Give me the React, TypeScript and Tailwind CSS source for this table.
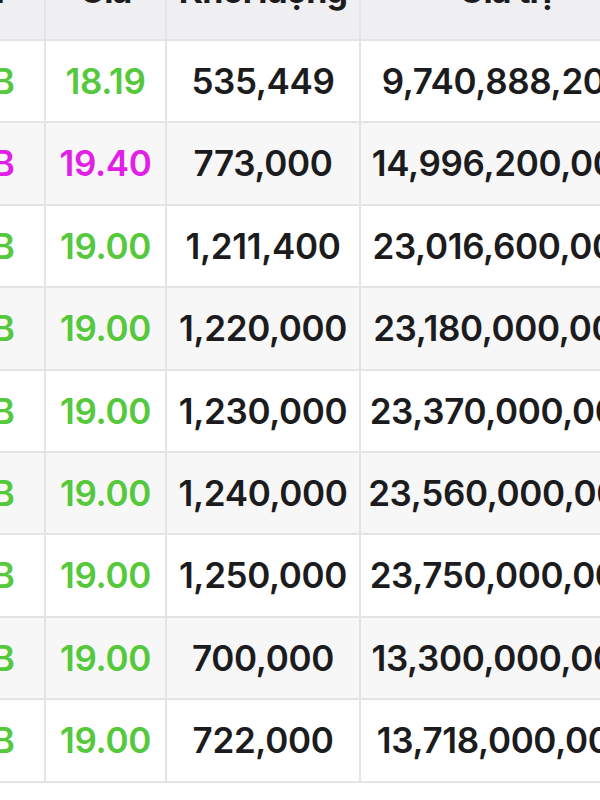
import React from 'react';

type Trade = {
  side: string;
  price: string;
  volume: string;
  value: string;
  color: 'up' | 'ceil';
};

const trades: Trade[] = [
  { side: 'B', price: '18.19', volume: '535,449', value: '9,740,888,200', color: 'up' },
  { side: 'B', price: '19.40', volume: '773,000', value: '14,996,200,000', color: 'ceil' },
  { side: 'B', price: '19.00', volume: '1,211,400', value: '23,016,600,000', color: 'up' },
  { side: 'B', price: '19.00', volume: '1,220,000', value: '23,180,000,000', color: 'up' },
  { side: 'B', price: '19.00', volume: '1,230,000', value: '23,370,000,000', color: 'up' },
  { side: 'B', price: '19.00', volume: '1,240,000', value: '23,560,000,000', color: 'up' },
  { side: 'B', price: '19.00', volume: '1,250,000', value: '23,750,000,000', color: 'up' },
  { side: 'B', price: '19.00', volume: '700,000', value: '13,300,000,000', color: 'up' },
  { side: 'B', price: '19.00', volume: '722,000', value: '13,718,000,000', color: 'up' },
];

const cols = 'grid grid-cols-[84px_121px_194px_290px]';
const cell = 'flex items-center justify-center border-r-2 border-[#e4e4e6] whitespace-nowrap';

const App = () => {
  return (
    <div
      className="w-[600px] h-[800px] overflow-hidden bg-white text-[#1c1c1e]"
      style={{ fontFamily: 'Inter, "Noto Sans", sans-serif' }}
    >
      <div className="w-[689px] -ml-[38px] -mt-[42px]">
        {/* header, mostly scrolled out of view */}
        <div className={`${cols} h-[83px] bg-[#efeff2] border-b-2 border-[#e4e4e6] text-[34px] font-bold tracking-tight`}>
          <div className="flex items-center justify-end pr-[40px] pb-[17px] border-r-2 border-[#e4e4e6] whitespace-nowrap">
            Mua
          </div>
          <div className={`${cell} pb-[17px]`}>Giá</div>
          <div className={`${cell} pb-[17px]`}>Khối lượng</div>
          <div className={`${cell} pb-[17px]`}>Giá trị</div>
        </div>
        {trades.map((t, i) => {
          const tone = t.color === 'ceil' ? 'text-[#e21fe6]' : 'text-[#55c83c]';
          return (
            <div
              key={i}
              className={`${cols} h-[82.4px] border-b-2 border-[#e4e4e6] text-[35px] font-semibold tracking-[-0.01em] ${
                i % 2 === 1 ? 'bg-[#f7f7f7]' : 'bg-white'
              }`}
            >
              <div className={`${cell} ${tone}`}>{t.side}</div>
              <div className={`${cell} ${tone}`}>{t.price}</div>
              <div className={cell}>{t.volume}</div>
              <div className={cell}>{t.value}</div>
            </div>
          );
        })}
      </div>
    </div>
  );
};

export default App;
